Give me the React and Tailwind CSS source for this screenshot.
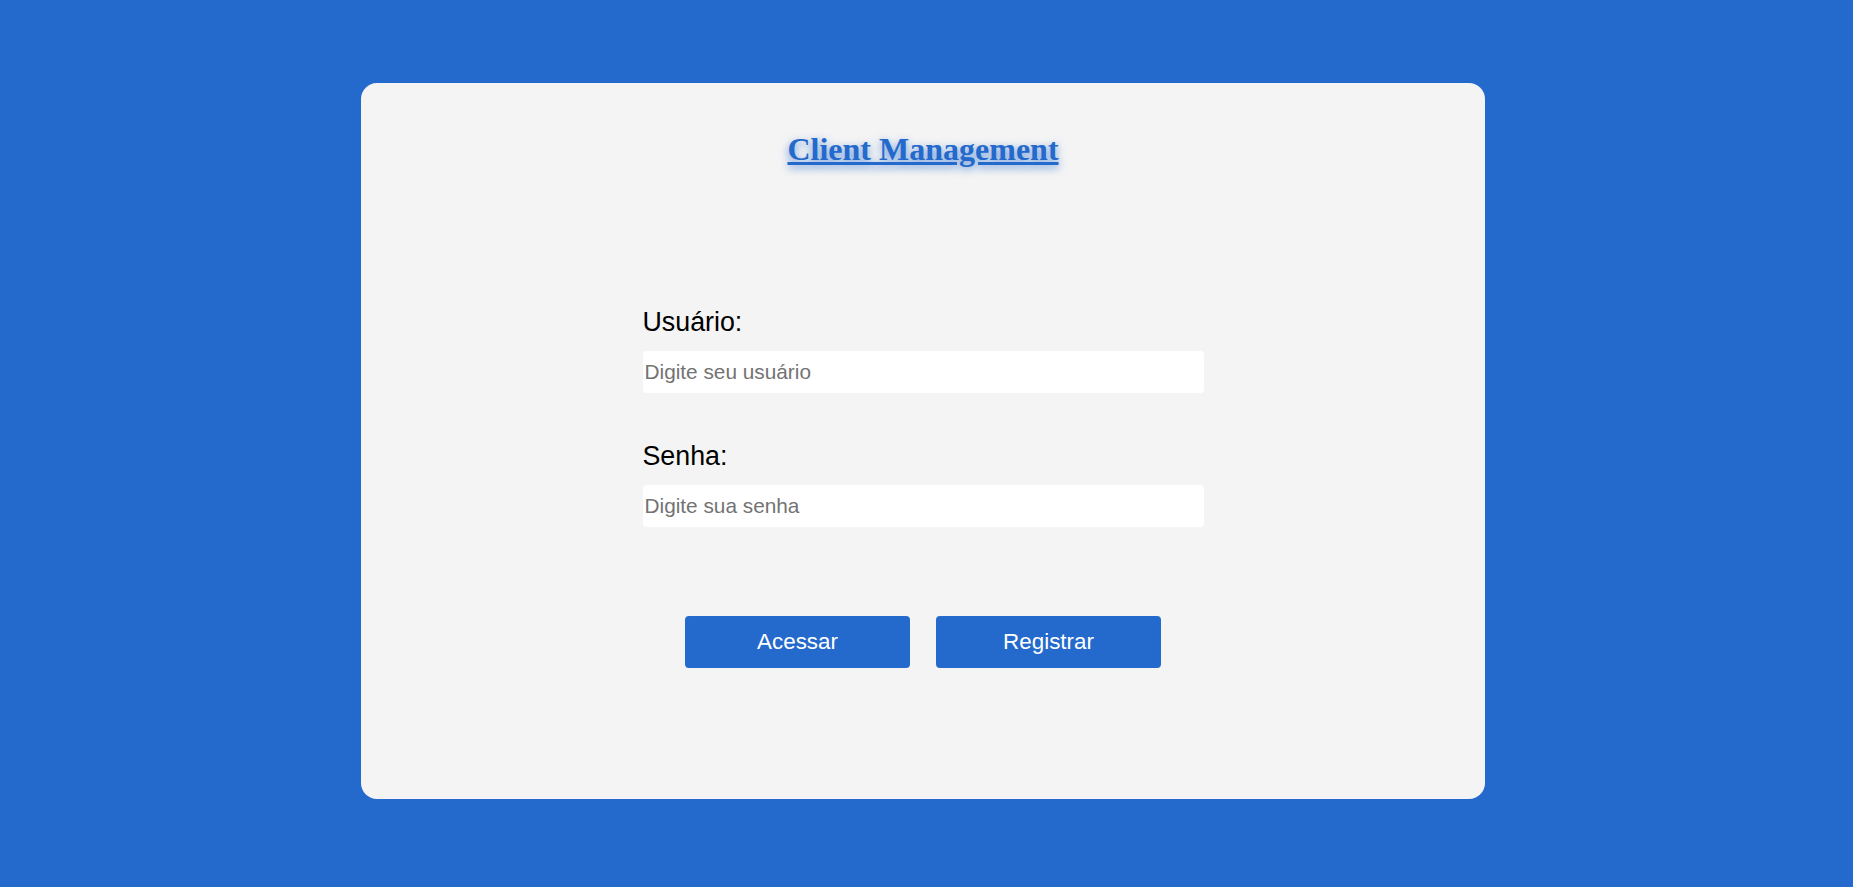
import React from 'react';

export default function App() {
  return (
    <div className="min-h-screen bg-[#2469cc] pt-[83px] pb-[88px] font-['Liberation_Sans',Arial,sans-serif]">
      <div className="ml-[361px] w-[1124px] h-[716px] bg-[#f4f4f4] rounded-[16px] flex flex-col items-center pt-[48px]">
        <h1 className="font-['Liberation_Serif','Times_New_Roman',serif] font-bold text-[32px] leading-[36px] text-[#2469cc] underline [text-shadow:0_3px_8px_rgba(36,105,204,0.7)]">
          Client Management
        </h1>

        <form className="mt-[140px] w-[561px] flex flex-col" onSubmit={(e) => e.preventDefault()}>
          <label htmlFor="usuario" className="text-[26.8px] leading-[30px] text-black">Usuário:</label>
          <input
            id="usuario"
            type="text"
            placeholder="Digite seu usuário"
            className="mt-[14px] h-[42px] w-full bg-white rounded-[4px] px-[2px] text-[20.8px] text-black placeholder:text-[#737373] outline-none"
          />

          <label htmlFor="senha" className="mt-[48px] text-[26.8px] leading-[30px] text-black">Senha:</label>
          <input
            id="senha"
            type="password"
            placeholder="Digite sua senha"
            className="mt-[14px] h-[42px] w-full bg-white rounded-[4px] px-[2px] text-[20.8px] text-black placeholder:text-[#737373] outline-none"
          />

          <div className="mt-[89px] flex justify-center gap-[26px]">
            <button type="submit" className="w-[225px] h-[52px] bg-[#2469cc] text-white text-[22.4px] rounded-[4px]">Acessar</button>
            <button type="button" className="w-[225px] h-[52px] bg-[#2469cc] text-white text-[22.4px] rounded-[4px]">Registrar</button>
          </div>
        </form>
      </div>
    </div>
  );
}
